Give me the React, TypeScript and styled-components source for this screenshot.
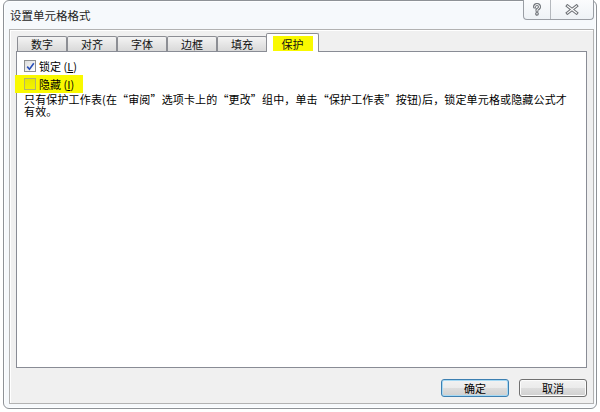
import React from "react";
import styled, { createGlobalStyle } from "styled-components";

const GlobalStyle = createGlobalStyle`
  html, body { margin: 0; padding: 0; background: #fff; }
  body { font-family: "Noto Sans CJK SC", "Liberation Sans", sans-serif; color: #000; }
`;

const Screen = styled.div`
  width: 600px;
  height: 412px;
  padding: 0 3px 3px;
  box-sizing: border-box;
  background: #fff;
  overflow: hidden;
`;

const Window = styled.div`
  height: 409px;
  box-sizing: border-box;
  border: 1px solid #8e9297;
  border-radius: 6px;
  background: #f6f9fc;
  box-shadow: inset 0 0 0 1px #fdfeff;
  display: flex;
  flex-direction: column;
  padding: 0 2px 4px 5px;
`;

const TitleBar = styled.div`
  height: 28px;
  display: flex;
  justify-content: space-between;
  align-items: flex-start;
`;

const Title = styled.div`
  padding: 7px 0 0 1px;
  font-size: 11.5px;
  line-height: 14px;
  color: #1e1e1e;
`;

const Captions = styled.div`
  display: flex;
  margin-top: -1px;
  height: 19px;
  border: 1px solid #9a9ea4;
  border-top: none;
  border-radius: 0 0 4px 4px;
  background: linear-gradient(#fbfcfd, #eef2f6);
  overflow: hidden;
`;

const CaptionButton = styled.div<{ $w: number; $divider?: boolean }>`
  width: ${(p) => p.$w}px;
  display: flex;
  align-items: center;
  justify-content: center;
  border-right: ${(p) => (p.$divider ? "1px solid #b4b8bd" : "none")};
`;

const Panel = styled.div`
  flex: 1;
  display: flex;
  flex-direction: column;
  background: #f0f0f0;
  border: 1px solid #b2b2b2;
  box-shadow: inset 1px 1px 0 #fff;
  padding: 4px 6px 6px 6px;
`;

const TabRow = styled.div`
  display: flex;
  align-items: flex-end;
  height: 18px;
  padding-left: 1px;
  position: relative;
  z-index: 1;
  margin-bottom: -1px;
`;

const Tab = styled.div<{ $active?: boolean }>`
  box-sizing: border-box;
  width: ${(p) => (p.$active ? 53 : 50)}px;
  height: ${(p) => (p.$active ? 19 : 15)}px;
  margin-left: ${(p) => (p.$active ? -1 : 0)}px;
  margin-bottom: ${(p) => (p.$active ? 0 : 1)}px;
  border: 1px solid #8c8e94;
  border-bottom: none;
  border-radius: 2px 2px 0 0;
  background: ${(p) => (p.$active ? "#fff" : "linear-gradient(#f4f4f4, #e6e6e6 50%, #d9d9d9)")};
  display: flex;
  align-items: center;
  justify-content: center;
  font-size: 11px;
  line-height: 12px;
  color: #111;
`;

const Marker = styled.span`
  background: #f9f900;
  padding: 2px 9px 1px;
  margin-top: 1px;
`;

const Content = styled.div`
  flex: 1;
  background: #fff;
  border: 1px solid #898c95;
  padding: 5px 7px;
  display: flex;
  flex-direction: column;
  align-items: flex-start;
`;

const CheckRow = styled.div<{ $marked?: boolean }>`
  height: 18px;
  display: flex;
  align-items: center;
  gap: 3px;
  font-size: 11px;
  background: ${(p) => (p.$marked ? "#f9f900" : "transparent")};
  margin-left: ${(p) => (p.$marked ? -9 : 0)}px;
  padding: ${(p) => (p.$marked ? "0 9px 0 9px" : "0")};
`;

const Box = styled.div<{ $marked?: boolean }>`
  width: 12px;
  height: 12px;
  box-sizing: border-box;
  border: 1px solid ${(p) => (p.$marked ? "#b4b46a" : "#8e8f8f")};
  background: ${(p) =>
    p.$marked ? "linear-gradient(#e8e800, #f4f400)" : "linear-gradient(135deg, #dcdcdc, #ffffff)"};
  display: flex;
  align-items: center;
  justify-content: center;
`;

const Note = styled.div`
  width: 552px;
  font-size: 11px;
  line-height: 12px;
  letter-spacing: 0.15px;
`;

const Buttons = styled.div`
  display: flex;
  justify-content: flex-end;
  gap: 10px;
  margin-top: 11px;
`;

const Button = styled.button<{ $default?: boolean }>`
  width: 68px;
  height: 18px;
  box-sizing: border-box;
  border: 1px solid ${(p) => (p.$default ? "#3c7fb1" : "#707070")};
  border-radius: 3px;
  background: linear-gradient(#f2f2f2, #ebebeb 50%, #dddddd 51%, #cfcfcf);
  box-shadow: ${(p) => (p.$default ? "inset 0 0 0 1px #a6d9f4" : "inset 0 0 0 1px #fcfcfc")};
  font-family: inherit;
  font-size: 11px;
  line-height: 12px;
  padding: 0;
  color: #000;
`;

const Mn = styled.u`
  text-decoration-thickness: 1px;
`;

const HelpIcon = () => (
  <svg width="10" height="13" viewBox="0 0 10 13">
    <g fill="none" strokeLinecap="round">
      <path d="M2.5 4 Q2.5 1.5 5 1.5 Q7.5 1.5 7.5 4 Q7.5 5.6 5 6.6 L5 8" stroke="#6f7378" strokeWidth="3" />
      <circle cx="5" cy="10.8" r="0.6" stroke="#6f7378" strokeWidth="2.6" />
      <path d="M2.5 4 Q2.5 1.5 5 1.5 Q7.5 1.5 7.5 4 Q7.5 5.6 5 6.6 L5 8" stroke="#fff" strokeWidth="1" />
      <circle cx="5" cy="10.8" r="0.4" fill="#fff" />
    </g>
  </svg>
);

const CloseIcon = () => (
  <svg width="14" height="11" viewBox="0 0 14 11">
    <g strokeLinecap="square">
      <path d="M2.5 2 L11.5 9 M11.5 2 L2.5 9" stroke="#6f7378" strokeWidth="3.2" />
      <path d="M2.5 2 L11.5 9 M11.5 2 L2.5 9" stroke="#fff" strokeWidth="1.2" />
    </g>
  </svg>
);

const Check = () => (
  <svg width="9" height="9" viewBox="0 0 9 9">
    <path d="M1.2 4.6 L3.5 7.2 L7.8 1.2" fill="none" stroke="#2a4fb8" strokeWidth="1.6" />
  </svg>
);

const tabs = ["数字", "对齐", "字体", "边框", "填充"];

export default function App() {
  return (
    <Screen>
      <GlobalStyle />
      <Window>
        <TitleBar>
          <Title>设置单元格格式</Title>
          <Captions>
            <CaptionButton $w={26} $divider>
              <HelpIcon />
            </CaptionButton>
            <CaptionButton $w={42}>
              <CloseIcon />
            </CaptionButton>
          </Captions>
        </TitleBar>
        <Panel>
          <TabRow>
            {tabs.map((t) => (
              <Tab key={t}>{t}</Tab>
            ))}
            <Tab $active>
              <Marker>保护</Marker>
            </Tab>
          </TabRow>
          <Content>
            <CheckRow>
              <Box>
                <Check />
              </Box>
              <span>
                锁定 (<Mn>L</Mn>)
              </span>
            </CheckRow>
            <CheckRow $marked>
              <Box $marked />
              <span>
                隐藏 (<Mn>I</Mn>)
              </span>
            </CheckRow>
            <Note>
              只有保护工作表(在“审阅”选项卡上的“更改”组中，单击“保护工作表”按钮)后，锁定单元格或隐藏公式才有效。
            </Note>
          </Content>
          <Buttons>
            <Button $default>确定</Button>
            <Button>取消</Button>
          </Buttons>
        </Panel>
      </Window>
    </Screen>
  );
}
